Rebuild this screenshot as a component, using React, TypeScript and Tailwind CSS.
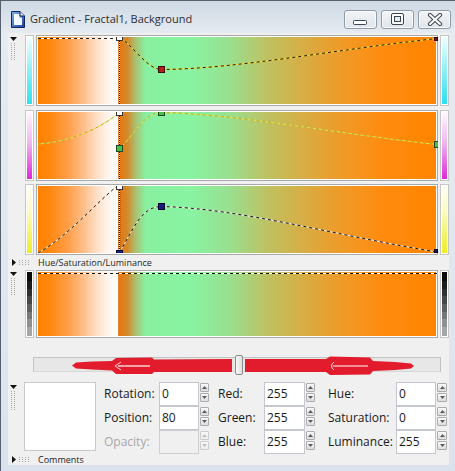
import React from "react";

const GRAD =
  "bg-[linear-gradient(to_right,#ff8000_0%,#ff8810_3%,#ff9e48_7.5%,#ffbf8a_11.5%,#ffdcc2_14.5%,#fff1e6_17%,#fffbf8_19%,#ffffff_20%,#e87410_20.25%,#d48a2c_22.5%,#aac070_24.5%,#88f0a0_27%,#88f4a2_38%,#98e090_48%,#c0c060_58%,#e8a030_73%,#ff8c10_86%,#ff8400_100%)]";

function TriDown() {
  return (
    <svg width="7" height="4" viewBox="0 0 7 4">
      <polygon points="0,0 7,0 3.5,4" fill="#111" />
    </svg>
  );
}
function TriRight() {
  return (
    <svg width="4" height="7" viewBox="0 0 4 7">
      <polygon points="0,0 4,3.5 0,7" fill="#111" />
    </svg>
  );
}
function GripV({ rows }: { rows: number }) {
  const dots: React.ReactElement[] = [];
  for (let i = 0; i < rows; i++) {
    dots.push(<rect key={"a" + i} x={0} y={i * 2} width={1} height={1} fill="#a4a4a4" />);
    dots.push(<rect key={"b" + i} x={3} y={i * 2} width={1} height={1} fill="#a4a4a4" />);
  }
  return (
    <svg width="4" height={rows * 2} viewBox={`0 0 4 ${rows * 2}`}>
      {dots}
    </svg>
  );
}
function GripH() {
  const dots: React.ReactElement[] = [];
  for (let c = 0; c < 4; c++)
    for (let r = 0; r < 3; r++)
      dots.push(<rect key={c + "-" + r} x={c * 3} y={r * 2} width={1} height={1} fill="#a4a4a4" />);
  return (
    <svg width="11" height="5" viewBox="0 0 11 5">
      {dots}
    </svg>
  );
}

function Strip({ g }: { g: string }) {
  return (
    <div className="w-[9px] h-full border border-[#c6c6c6] bg-white p-[1px] shrink-0">
      <div className={`h-full w-full ${g}`} />
    </div>
  );
}

function D({ d, base, dash, op = 1 }: { d: string; base: string; dash: string; op?: number }) {
  return (
    <>
      <path d={d} fill="none" stroke={base} strokeWidth={1} />
      <path d={d} fill="none" stroke={dash} strokeWidth={1} strokeDasharray="3 3" opacity={op} />
    </>
  );
}

function Panel({
  cls,
  strip,
  grip,
  children,
}: {
  cls: string;
  strip: string;
  grip?: boolean;
  children: React.ReactNode;
}) {
  return (
    <div className={`flex shrink-0 ${cls}`}>
      <div className="w-[17px] flex flex-col items-start pt-[2px] pl-[2px] gap-[2px] shrink-0">
        {grip && (
          <>
            <TriDown />
            <div className="pl-[1px]">
              <GripV rows={9} />
            </div>
          </>
        )}
      </div>
      <Strip g={strip} />
      <div className="ml-[2px] w-[402px] h-full border border-[#a9a9a9] bg-white p-[1px] shrink-0">
        <div className={`relative h-full w-full ${GRAD}`}>{children}</div>
      </div>
      <div className="ml-[2px] h-full">
        <Strip g={strip} />
      </div>
    </div>
  );
}

function VDots({ h, bold }: { h: number; bold?: boolean }) {
  return (
    <>
      <line x1="81.5" y1="0" x2="81.5" y2={h} stroke="#ffffff" strokeWidth={1} />
      <line x1="81.5" y1="0" x2="81.5" y2={h} stroke="#111" strokeWidth={bold ? 1.4 : 1} strokeDasharray="1 1" />
    </>
  );
}

function Field({ v, w, disabled }: { v: string; w: string; disabled?: boolean }) {
  return (
    <div
      className={`${w} h-[24px] shrink-0 border ${
        disabled ? "border-[#cfcfcf] bg-[#f0f0f0]" : "border-[#c4c8ce] bg-white"
      } text-[12px] leading-[22px] pl-[2px]`}
    >
      {v}
    </div>
  );
}

function Spin({ w, disabled }: { w: string; disabled?: boolean }) {
  const c = disabled ? "#c0c0c0" : "#5a5a5a";
  const b = disabled
    ? "border-[#cdcdcd] bg-[linear-gradient(#f8f8f8,#ececec)]"
    : "border-[#acacac] bg-[linear-gradient(#f9f9f9,#dcdcdc)]";
  return (
    <div className={`${w} h-[20px] flex flex-col gap-[1px] self-start mt-[1px] ml-[1px] shrink-0`}>
      <div className={`h-[9px] rounded-[1px] border ${b} flex items-center justify-center`}>
        <svg width="5" height="3" viewBox="0 0 5 3">
          <polygon points="0,3 5,3 2.5,0" fill={c} />
        </svg>
      </div>
      <div className={`h-[9px] rounded-[1px] border ${b} flex items-center justify-center`}>
        <svg width="5" height="3" viewBox="0 0 5 3">
          <polygon points="0,0 5,0 2.5,3" fill={c} />
        </svg>
      </div>
    </div>
  );
}

function TitleBtn({ children }: { children: React.ReactNode }) {
  return (
    <div className="w-[33px] h-[19px] rounded-[3px] border border-[#8e9aa8] bg-[linear-gradient(#f2f4f7,#e0e5eb)] shadow-[inset_0_0_0_1px_rgba(255,255,255,0.75)] flex items-center justify-center">
      {children}
    </div>
  );
}

function DocIcon() {
  return (
    <svg width="14" height="17" viewBox="0 0 14 17">
      <defs>
        <linearGradient id="docg" x1="0" y1="0" x2="1" y2="1">
          <stop offset="0" stopColor="#7fb0f0" />
          <stop offset="1" stopColor="#1a3f9a" />
        </linearGradient>
      </defs>
      <path d="M0.5 0.5 H9 L13.5 5 V16.5 H0.5 Z" fill="url(#docg)" stroke="#0e2360" />
      <path d="M3 3 H8.5 V6.5 H11 V14 H3 Z" fill="#f4f8ff" />
      <path d="M9 0.5 V5 H13.5" fill="#dce8f8" stroke="#0e2360" />
    </svg>
  );
}

export default function App() {
  return (
    <div className="w-[455px] h-[471px] overflow-hidden flex flex-col border-t border-l border-[#56616d] bg-[linear-gradient(to_bottom,#cfd9e4,#e6ebf1_33px,#dae3ed)] font-['Open_Sans',sans-serif] text-[#1a1a1a]">
      {/* title bar */}
      <div className="h-[32px] flex items-start shrink-0">
        <div className="ml-[10px] mt-[10px]">
          <DocIcon />
        </div>
        <div className="ml-[5px] mt-[10px] text-[11px] leading-[16px] text-[#2e2e2e]">
          Gradient - Fractal1, Background
        </div>
        <div className="ml-auto mr-[4px] mt-[9px] flex gap-[4px]">
          <TitleBtn>
            <svg width="15" height="12" viewBox="0 0 15 12">
              <rect x="0.5" y="6.5" width="13" height="4" rx="1" fill="#fff" stroke="#3a4553" />
            </svg>
          </TitleBtn>
          <TitleBtn>
            <svg width="14" height="13" viewBox="0 0 14 13">
              <rect x="0.5" y="0.5" width="12" height="11" rx="1.5" fill="#fff" stroke="#3a4553" />
              <rect x="3.5" y="3.5" width="6" height="5" fill="#e6ebf0" stroke="#3a4553" />
            </svg>
          </TitleBtn>
          <TitleBtn>
            <svg width="16" height="13" viewBox="0 0 16 13">
              <path d="M3 2 L13 11 M13 2 L3 11" stroke="#3a4553" strokeWidth="4.2" strokeLinecap="round" />
              <path d="M3 2 L13 11 M13 2 L3 11" stroke="#ffffff" strokeWidth="2.2" strokeLinecap="round" />
            </svg>
          </TitleBtn>
        </div>
      </div>

      {/* client */}
      <div className="flex-1 pl-[7px] pr-[6px] pb-[6px] min-h-0">
        <div className="h-full bg-[#f0f0f0] pt-[2px] flex flex-col">
          {/* Panel 1 - hue */}
          <Panel cls="h-[71px]" strip="bg-[linear-gradient(to_bottom,#f2ffff,#2ae0ee)]" grip>
            <svg className="absolute inset-0" width="400" height="67" viewBox="0 0 400 67">
              <D d="M0 1.5 H81" base="#ffffff" dash="#222222" />
              <D d="M81.5 1.5 C 92 4, 108 32, 123 32.5" base="#f2dc30" dash="#2a1a00" />
              <D d="M123 32.5 C 200 32, 300 12, 399 1.5" base="#f2dc30" dash="#2a1a00" />
              <VDots h={67} />
              <rect x="78.5" y="-2.5" width="6" height="6" fill="#ffffff" stroke="#333" />
              <rect x="120.5" y="29.5" width="6" height="6" fill="#b41e1e" stroke="#3a0a0a" />
              <rect x="396.5" y="0.5" width="3" height="3" fill="#8a1010" stroke="#300" />
            </svg>
          </Panel>

          {/* Panel 2 - saturation */}
          <div className="mt-[4px]">
            <Panel cls="h-[71px]" strip="bg-[linear-gradient(to_bottom,#fff8ff,#f0b8f0_45%,#dc28d8)]">
              <svg className="absolute inset-0" width="400" height="67" viewBox="0 0 400 67">
                <D d="M0 32 C 30 30, 60 18, 81 1" base="#f4e040" dash="#708838" op={0.55} />
                <D d="M81.5 36.5 C 95 25, 105 1, 123 0.5" base="#f4e040" dash="#708838" op={0.55} />
                <D d="M123 0.5 C 200 2, 300 22, 399 32.5" base="#f4e040" dash="#5f8a40" op={0.5} />
                <VDots h={67} />
                <rect x="78.5" y="-2.5" width="6" height="6" fill="#ffffff" stroke="#333" />
                <rect x="78.5" y="33.5" width="6" height="6" fill="#4cbc4c" stroke="#1c4a1c" />
                <rect x="120.5" y="-2.5" width="6" height="6" fill="#4cbc4c" stroke="#1c4a1c" />
                <rect x="396.5" y="29.5" width="6" height="6" fill="#4cbc4c" stroke="#1c4a1c" />
              </svg>
            </Panel>
          </div>

          {/* Panel 3 - luminance */}
          <div className="mt-[3px]">
            <Panel cls="h-[71px]" strip="bg-[linear-gradient(to_bottom,#fffff6,#fafac0_40%,#eeee22)]">
              <svg className="absolute inset-0" width="400" height="67" viewBox="0 0 400 67">
                <D d="M0 67 C 30 50, 55 20, 78 1" base="#fff2d8" dash="#111111" />
                <D d="M81.5 66 C 95 45, 102 21, 123 20.5" base="#f8f0c8" dash="#111111" />
                <D d="M123 20.5 C 200 22, 300 50, 399 66" base="#f8f0c8" dash="#101040" />
                <VDots h={67} bold />
                <rect x="78.5" y="-2.5" width="6" height="6" fill="#ffffff" stroke="#333" />
                <rect x="78.5" y="64.5" width="6" height="6" fill="#141c80" stroke="#000030" />
                <rect x="120.5" y="17.5" width="6" height="6" fill="#141c80" stroke="#000030" />
                <rect x="396.5" y="63.5" width="3" height="3" fill="#1a1a60" stroke="#000020" />
              </svg>
            </Panel>
          </div>

          {/* HSL label row */}
          <div className="h-[15px] flex items-center shrink-0">
            <div className="ml-[4px]">
              <TriRight />
            </div>
            <div className="ml-[3px]">
              <GripH />
            </div>
            <div className="ml-[8px] text-[9px] leading-[12px] text-[#1e1e1e]">Hue/Saturation/Luminance</div>
          </div>

          {/* Panel 4 - combined */}
          <Panel
            cls="h-[68px]"
            strip="bg-[linear-gradient(to_bottom,#0a0a0a_0%,#0a0a0a_14%,#1c1c1c_14%,#1c1c1c_26%,#303030_26%,#303030_38%,#474747_38%,#474747_50%,#5f5f5f_50%,#5f5f5f_62%,#777777_62%,#777777_74%,#909090_74%,#909090_86%,#a6a6a6_86%)]"
            grip
          >
            <svg className="absolute inset-0" width="400" height="64" viewBox="0 0 400 64">
              <D d="M0 1.5 H400" base="#ffffff" dash="#111111" />
            </svg>
          </Panel>

          {/* slider */}
          <div className="mt-[17px] h-[20px] relative shrink-0">
            <div className="ml-[25px] mt-[2px] w-[408px] h-[15px] border border-[#c2c2c2] border-b-[#d8d8d8] bg-[#e7e7e7] relative">
              <div className="absolute left-[201px] top-[-3px] w-[8px] h-[20px] rounded-[2px] border border-[#8c8c8c] bg-[linear-gradient(to_right,#fafafa,#dedede)]" />
            </div>
            <svg className="absolute left-0 top-0 pointer-events-none" width="441" height="20" viewBox="0 0 441 20">
              <g transform="translate(-8,-355)">
                <polygon
                  points="72,365.5 76,362.5 92,361.5 112,361 116,358 152,357.5 154,359.5 232,359 232,372 154,372 152,374 116,374 112,370.5 92,369.5 76,368.5"
                  fill="#e21c2c"
                />
                <path d="M118 366 H150" stroke="#ffffff" strokeWidth="1.2" />
                <path d="M121 362 L115 366 L121 370" stroke="#ffd4d8" strokeWidth="1" fill="none" />
                <polygon
                  points="245,359 326,359 330,356.5 370,357.5 373,361 395,362 411,363.5 414,366 411,368.5 395,370 373,371 370,374.5 330,375 326,372 245,372"
                  fill="#e21c2c"
                />
                <path d="M333 366 H368" stroke="#ffffff" strokeWidth="1.2" />
                <path d="M334 362 Q329 366 334 370" stroke="#ffd4d8" strokeWidth="1" fill="none" />
              </g>
            </svg>
          </div>

          {/* bottom properties */}
          <div className="mt-[7px] h-[72px] flex shrink-0">
            <div className="w-[16px] flex flex-col items-start pt-[3px] pl-[2px] gap-[2px] shrink-0">
              <TriDown />
              <div className="pl-[1px]">
                <GripV rows={10} />
              </div>
            </div>
            <div className="w-[72px] h-[69px] border border-[#c9c9c9] bg-white shrink-0" />
            <div className="ml-[8px] flex flex-col text-[12px]">
              <div className="flex items-center h-[24px]">
                <div className="w-[55px] shrink-0">Rotation:</div>
                <Field v="0" w="w-[40px]" />
                <Spin w="w-[9px]" />
                <div className="ml-[9px] w-[46px] shrink-0">Red:</div>
                <Field v="255" w="w-[41px]" />
                <Spin w="w-[9px]" />
                <div className="ml-[13px] w-[68px] shrink-0">Hue:</div>
                <Field v="0" w="w-[40px]" />
                <Spin w="w-[10px]" />
              </div>
              <div className="flex items-center h-[24px]">
                <div className="w-[55px] shrink-0">Position:</div>
                <Field v="80" w="w-[40px]" />
                <Spin w="w-[9px]" />
                <div className="ml-[9px] w-[46px] shrink-0">Green:</div>
                <Field v="255" w="w-[41px]" />
                <Spin w="w-[9px]" />
                <div className="ml-[13px] w-[68px] shrink-0">Saturation:</div>
                <Field v="0" w="w-[40px]" />
                <Spin w="w-[10px]" />
              </div>
              <div className="flex items-center h-[24px]">
                <div className="w-[55px] shrink-0 text-[#a8a8a8]">Opacity:</div>
                <Field v="" w="w-[40px]" disabled />
                <Spin w="w-[9px]" disabled />
                <div className="ml-[9px] w-[46px] shrink-0">Blue:</div>
                <Field v="255" w="w-[41px]" />
                <Spin w="w-[9px]" />
                <div className="ml-[13px] w-[68px] shrink-0">Luminance:</div>
                <Field v="255" w="w-[40px]" />
                <Spin w="w-[10px]" />
              </div>
            </div>
          </div>

          {/* comments row */}
          <div className="h-[11px] flex items-center shrink-0">
            <div className="ml-[4px]">
              <TriRight />
            </div>
            <div className="ml-[3px]">
              <GripH />
            </div>
            <div className="ml-[8px] text-[9px] leading-[11px] text-[#1e1e1e]">Comments</div>
          </div>
        </div>
      </div>
    </div>
  );
}
